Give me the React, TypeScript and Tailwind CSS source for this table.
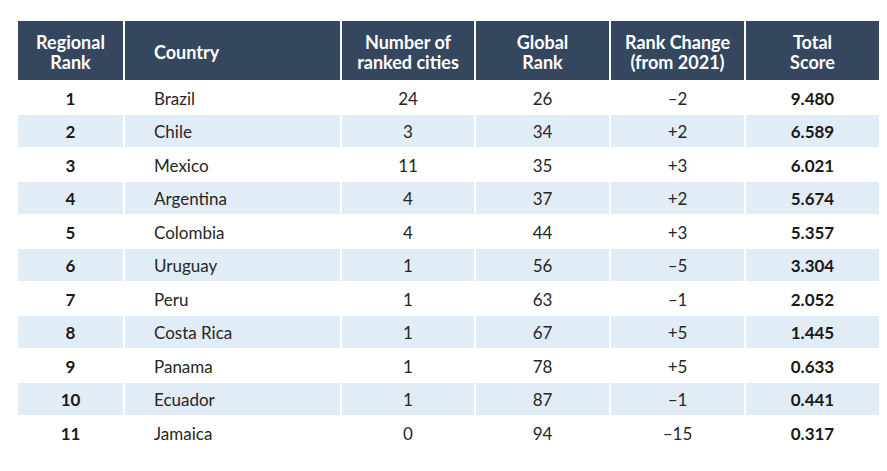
import React from "react";

const rows: [string, string, string, string, string, string][] = [
  ["1", "Brazil", "24", "26", "–2", "9.480"],
  ["2", "Chile", "3", "34", "+2", "6.589"],
  ["3", "Mexico", "11", "35", "+3", "6.021"],
  ["4", "Argentina", "4", "37", "+2", "5.674"],
  ["5", "Colombia", "4", "44", "+3", "5.357"],
  ["6", "Uruguay", "1", "56", "–5", "3.304"],
  ["7", "Peru", "1", "63", "–1", "2.052"],
  ["8", "Costa Rica", "1", "67", "+5", "1.445"],
  ["9", "Panama", "1", "78", "+5", "0.633"],
  ["10", "Ecuador", "1", "87", "–1", "0.441"],
  ["11", "Jamaica", "0", "94", "–15", "0.317"],
];

const headers = [
  ["Regional", "Rank"],
  ["Country"],
  ["Number of", "ranked cities"],
  ["Global", "Rank"],
  ["Rank Change", "(from 2021)"],
  ["Total", "Score"],
];

export default function App() {
  return (
    <div
      className="w-[887px] h-[471px] bg-white pt-[21px] pl-[18px]"
      style={{ fontFamily: "Lato, 'Noto Sans', sans-serif" }}
    >
      <div className="grid grid-cols-[105px_215px_132px_133px_133px_133px] gap-x-[2px] gap-y-[1.5px] w-[861px]">
        {headers.map((h, i) => (
          <div
            key={i}
            className={`h-[59px] bg-[#34475f] text-white font-bold text-[18px] leading-[20px] flex flex-col justify-center pt-[2px] ${
              i === 1 ? "items-start pl-[29px]" : "items-center text-center"
            }`}
          >
            {h.map((l, j) => (
              <span key={j}>{l}</span>
            ))}
          </div>
        ))}
        {rows.map((r, ri) => {
          const bg = ri % 2 === 1 ? "bg-[#e2ecf6]" : "bg-white";
          return r.map((c, ci) => (
            <div
              key={`${ri}-${ci}`}
              className={`h-[32px] ${bg} flex items-center pt-[2px] text-[17px] ${
                ci === 1 ? "justify-start pl-[29px]" : "justify-center"
              } ${
                ci === 0 || ci === 5
                  ? "font-bold text-[#1a1a1a]"
                  : "text-[#262626]"
              }`}
            >
              {c}
            </div>
          ));
        })}
      </div>
    </div>
  );
}
